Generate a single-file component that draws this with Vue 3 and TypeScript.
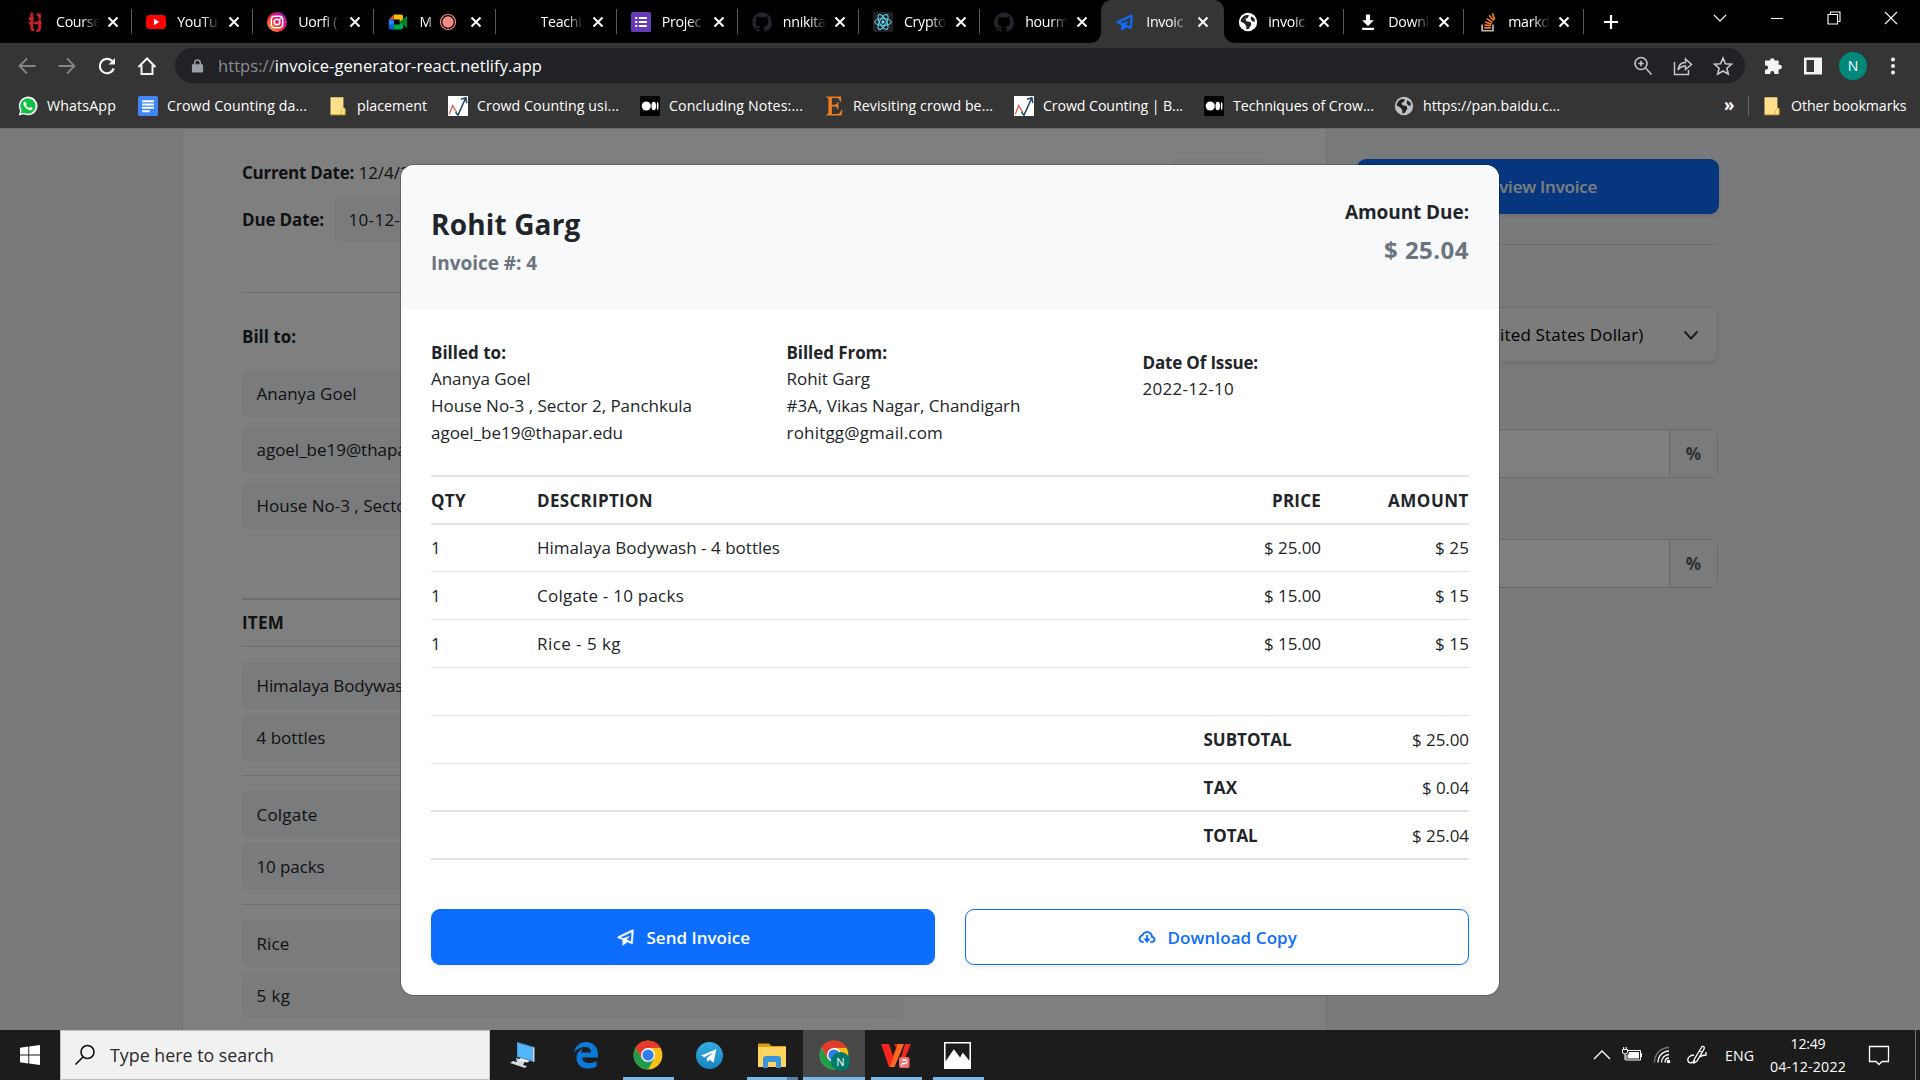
<script setup lang="ts">
interface Tab { icon: string; title: string; active?: boolean; rec?: boolean; sep?: boolean; narrow?: boolean }
interface Bookmark { icon: string; label: string; w: number }
interface Line { qty: number; desc: string; price: string; amount: string; w: number }

// Spreads the tracking of a label so that it occupies the given width.
const vFit = {
  mounted(el: HTMLElement, binding: { value: number }) {
    const range = document.createRange()
    range.selectNodeContents(el)
    const natural = range.getBoundingClientRect().width
    const count = (el.textContent ?? '').trim().length
    if (count > 1) el.style.letterSpacing = `${((binding.value - natural) / count).toFixed(3)}px`
  },
}

const plane = '<path d="M20.563 3.34a1.002 1.002 0 0 0-.989-.079l-17 8a1 1 0 0 0 .026 1.821L8 15.445v6.722l5.836-4.168 4.764 2.084a1 1 0 0 0 1.399-.85l1-15a1.005 1.005 0 0 0-.436-.893zm-2.466 14.34-5.269-2.306L16 11.167l-7.649 2.551-2.932-1.283 13.471-6.34-.793 11.585z"/>'
const chrome = '<circle cx="12" cy="12" r="11.5" fill="#fbc116"/><path d="M12 12 2 6.300A11.500 11.500 0 0 1 21.960 6.250H12z" fill="#e33b2e"/><path d="M12 .5A11.5 11.5 0 0 0 2.040 6.250L7 15l5-3V6.250h9.960A11.500 11.500 0 0 0 12 .5z" fill="#e33b2e"/><path d="M2.040 6.250A11.500 11.500 0 0 0 12 23.500l5-8.600L12 12 7 14.900z" fill="#1f9d4d"/><circle cx="12" cy="12" r="5.600" fill="#fff"/><circle cx="12" cy="12" r="4.500" fill="#2f7de9"/>'
const github = '<path fill="#22272d" d="M12 .5C5.400.5.200 5.800.200 12.300c0 5.200 3.400 9.600 8 11.200.6.100.8-.3.800-.6v-2.100c-3.300.7-4-1.400-4-1.400-.5-1.400-1.300-1.700-1.300-1.700-1.100-.7.100-.7.100-.7 1.200.1 1.800 1.200 1.800 1.200 1 1.800 2.800 1.300 3.400 1 .1-.8.400-1.300.8-1.600-2.700-.3-5.400-1.300-5.400-5.800 0-1.300.5-2.300 1.200-3.200-.1-.3-.5-1.500.1-3.200 0 0 1-.3 3.300 1.200a11 11 0 0 1 6 0c2.200-1.500 3.200-1.200 3.200-1.200.7 1.700.3 2.900.1 3.200.8.900 1.200 1.900 1.200 3.200 0 4.500-2.700 5.500-5.400 5.800.5.400.9 1.100.9 2.200v3.300c0 .3.200.7.800.6a11.800 11.800 0 0 0 8-11.200C23.800 5.800 18.600.5 12 .5z"/>'
const globe = (c: string): string => `<circle cx="12" cy="12" r="11" fill="${c}"/><path fill="#222" d="M4 8c2-3 5-5 9-4l-1 3-3 1 1 3 5 1 1 3-3 5-3 1v-4l-2-3-5-3zM16 5l4 3v4l-3-1-2-3z"/>`
const icons: Record<string, string> = {
  plane,
  chrome,
  github,
  cloud: '<path d="M18.948 11.112C18.511 7.670 15.563 5 12.004 5c-2.756 0-5.150 1.611-6.243 4.150-2.148.642-3.757 2.670-3.757 4.850 0 2.757 2.243 5 5 5h1v-2h-1c-1.654 0-3-1.346-3-3 0-1.404 1.199-2.757 2.673-3.016l.581-.102.192-.558C8.153 8.273 9.898 7 12.004 7c2.757 0 5 2.243 5 5v1h1c1.103 0 2 .897 2 2s-.897 2-2 2h-2v2h2c2.206 0 4-1.794 4-4a4.008 4.008 0 0 0-3.056-3.888z"/><path d="M13.004 14v-4h-2v4h-3l4 5 4-5z"/>',
  planeBlue: `<g fill="#0d6efd" stroke="#0d6efd" stroke-width=".6">${plane}</g>`,
  tl: '<g fill="none" stroke="#c62127" stroke-width="3.200"><path d="M8 1v18.500q0 2 3 2M4.500 8h6M4.500 13.500h6M14 3.500h5M17.500 9v11q0 2.500-4 2.500M11 13h9M17.500 5v3"/></g>',
  youtube: '<rect x="0" y="3.500" width="24" height="17" rx="4.500" fill="#f00"/><path d="M9.500 8.200v7.600L16 12z" fill="#fff"/>',
  instagram: '<defs><linearGradient id="ig" x1="0" y1="1" x2="1" y2="0"><stop offset="0" stop-color="#fec34a"/><stop offset=".35" stop-color="#f9472f"/><stop offset=".6" stop-color="#e0167b"/><stop offset="1" stop-color="#7a22d0"/></linearGradient></defs><circle cx="12" cy="12" r="12" fill="url(#ig)"/><g fill="none" stroke="#fff" stroke-width="1.800"><rect x="5.200" y="5.200" width="13.600" height="13.600" rx="4"/><circle cx="12" cy="12" r="3.400"/></g><circle cx="16" cy="8" r="1" fill="#fff"/>',
  meet: '<path d="M1 9 7 3v6z" fill="#ea4335"/><path d="M7 3h9q2 0 2 2v4l-4 3V9H7z" fill="#fbbc04"/><path d="M1 9h6v7H1z" fill="#2684fc"/><path d="M1 15h6v6H3q-2 0-2-2z" fill="#0066da"/><path d="M7 15h7v-3l4 3v4q0 2-2 2H7z" fill="#00ac47"/><path d="m14 12 8-7q1 0 1 1v12q0 1-1 1z" fill="#00832d"/>',
  forms: '<rect width="24" height="24" rx="2" fill="#673ab7"/><path d="M5 6h2.500v2.500H5zM9.500 6H19v2.500H9.500zM5 10.800h2.500v2.500H5zM9.500 10.800H19v2.500H9.500zM5 15.600h2.500v2.500H5zM9.500 15.600H19v2.500H9.500z" fill="#fff"/>',
  react: '<rect width="24" height="24" rx="2.500" fill="#222"/><g fill="none" stroke="#61dafb" stroke-width="1.200"><ellipse cx="12" cy="12" rx="10" ry="4"/><ellipse cx="12" cy="12" rx="10" ry="4" transform="rotate(60 12 12)"/><ellipse cx="12" cy="12" rx="10" ry="4" transform="rotate(120 12 12)"/></g><circle cx="12" cy="12" r="2" fill="#61dafb"/>',
  globe: globe('#fff'),
  globeGrey: globe('#bdc1c6'),
  download: '<path fill="#fff" d="M9.500 3h5v7H19l-7 7-7-7h4.500zM5 19h14v2.500H5z"/>',
  stack: '<g fill="none"><path d="M5 15v7.500h13V15" stroke="#bcbbbb" stroke-width="2"/><path d="M7.500 19h8M7.600 15.600l8 .8M8.500 12l7.700 2.400M10.500 8l6.800 4.400M13.500 4l5.200 6.200M17.500 1.500l2.300 7.600" stroke="#f48024" stroke-width="2"/></g>',
  whatsapp: '<path d="M1 23.300 2.500 17.500A11.200 11.200 0 1 1 7 21.800z" fill="#fff"/><path d="m3.300 21 1-3.800A9.200 9.200 0 1 1 7.300 20z" fill="#0dc143"/><path d="M8.300 6.500c-.6 0-1.800 1-1.800 2.700 0 3 4.500 7.800 8.200 7.800 1.800 0 2.800-1.200 2.800-2.600l-2.700-1.500-1.400 1.500c-1.600-.5-3.200-2.100-3.800-3.500l1.100-1.300z" fill="#fff"/>',
  docs: '<rect width="24" height="24" rx="2" fill="#4285f4"/><path d="M5 5h14v2.400H5zM5 9h14v2.400H5zM5 13h14v2.400H5zM5 17h9v2.400H5z" fill="#fff"/>',
  folder: '<path d="M3 1.500h15.500V14l2 1v7.500H3z" fill="#ffe08a"/><path d="M15.500 22.500c0-4 .5-5 3-7.500M3 22.500h17.500V15" fill="none" stroke="#d9b13f" stroke-width="1.200"/>',
  chart: '<rect width="24" height="24" fill="#fff"/><path d="M1.500 22 5.500 11.500l5 8" fill="none" stroke="#e0604c" stroke-width="1.600"/><path d="M9 19.500 12 23 21 3M15.500 4l6-2 1 6.500" fill="none" stroke="#1d4468" stroke-width="1.800"/>',
  medium: '<rect width="24" height="24" rx="1.500" fill="#000"/><circle cx="7.500" cy="12" r="5.500" fill="#fff"/><ellipse cx="16.500" cy="12" rx="2.700" ry="5.200" fill="#fff"/><ellipse cx="21.200" cy="12" rx="1" ry="4.700" fill="#fff"/>',
  etsy: '<path d="M2.500.5h18v6.300h-1.300C18.500 3.500 17.500 2.500 15 2.500H9.500v8h3.300c2 0 2.800-.8 3.200-3.200h1.200v8.500H16c-.4-2.600-1.200-3.300-3.200-3.300H9.500v9h6c3 0 4.300-1.500 5.200-5h1.300l-.8 7H2.500v-1.300c2.300-.2 2.800-.7 2.800-2.600V4.400c0-1.900-.5-2.400-2.800-2.600z" fill="#ee7f22"/>',
}

const tabs: Tab[] = [
  { icon: 'tl', title: 'Course', sep: true },
  { icon: 'youtube', title: 'YouTu', sep: true },
  { icon: 'instagram', title: 'Uorfi (', sep: true },
  { icon: 'meet', title: 'M', rec: true, sep: true },
  { icon: '', title: 'Teachi', sep: true },
  { icon: 'forms', title: 'Projec', sep: true },
  { icon: 'github', title: 'nnikita', sep: true },
  { icon: 'react', title: 'Crypto', sep: true },
  { icon: 'github', title: 'hourm' },
  { icon: 'planeBlue', title: 'Invoic', active: true },
  { icon: 'globe', title: 'invoic', sep: true, narrow: true },
  { icon: 'download', title: 'Downl', sep: true, narrow: true },
  { icon: 'stack', title: 'markd', sep: true, narrow: true },
]

const bookmarks: Bookmark[] = [
  { icon: 'whatsapp', label: 'WhatsApp', w: 69 },
  { icon: 'docs', label: 'Crowd Counting da...', w: 140 },
  { icon: 'folder', label: 'placement', w: 70 },
  { icon: 'chart', label: 'Crowd Counting usi...', w: 142 },
  { icon: 'medium', label: 'Concluding Notes:...', w: 134 },
  { icon: 'etsy', label: 'Revisiting crowd be...', w: 140 },
  { icon: 'chart', label: 'Crowd Counting | B...', w: 140 },
  { icon: 'medium', label: 'Techniques of Crow...', w: 141 },
  { icon: 'globeGrey', label: 'https://pan.baidu.c...', w: 137 },
]

const billTo: string[] = ['Ananya Goel', 'agoel_be19@thapar.edu', 'House No-3 , Sector 2, Panchkula']
const billToW: number[] = [100, 192, 261.5]
const items: [string, string][] = [['Himalaya Bodywash', '4 bottles'], ['Colgate', '10 packs'], ['Rice', '5 kg']]
const itemsW: [number, number][] = [[157, 69], [61, 68], [33, 34]]

const lines: Line[] = [
  { qty: 1, desc: 'Himalaya Bodywash - 4 bottles', price: '$ 25.00', amount: '$ 25', w: 243 },
  { qty: 1, desc: 'Colgate - 10 packs', price: '$ 15.00', amount: '$ 15', w: 147 },
  { qty: 1, desc: 'Rice - 5 kg', price: '$ 15.00', amount: '$ 15', w: 84 },
]
const totals = [
  { label: 'SUBTOTAL', value: '$ 25.00', lw: 88, w: 57 },
  { label: 'TAX', value: '$ 0.04', lw: 34, w: 47 },
  { label: 'TOTAL', value: '$ 25.04', lw: 54, w: 57 },
]
</script>

<template>
  <div class="screen">
    <header class="browser">
      <div class="tabs">
        <div v-for="(t, i) in tabs" :key="i" class="tab" :class="{ active: t.active, sep: t.sep, narrow: t.narrow }">
          <svg class="fav" viewBox="0 0 24 24" v-html="icons[t.icon] || ''"></svg>
          <span class="title" :class="{ short: t.rec }">{{ t.title }}</span>
          <svg v-if="t.rec" class="rec" viewBox="0 0 18 18"><circle cx="9" cy="9" r="7.500" fill="none" stroke="#f28b82" stroke-width="1.200" /><circle cx="9" cy="9" r="5.700" fill="#f28b82" /></svg>
          <svg class="x" viewBox="0 0 12 12"><path d="M1.500 1.500l9 9M10.500 1.500l-9 9" stroke="#fff" stroke-width="2" /></svg>
        </div>
        <svg class="plus" viewBox="0 0 16 16"><path d="M8 1v14M1 8h14" stroke="#fff" stroke-width="2.200" /></svg>
        <div class="wincontrols">
          <svg viewBox="0 0 16 16"><path d="M2 5l6 6 6-6" /></svg>
          <svg viewBox="0 0 16 16"><path d="M2 8.500h12" /></svg>
          <svg viewBox="0 0 16 16"><path d="M2 4.500h9.500v9.500H2zM4.500 4.500V2H14v9.500h-2.500" /></svg>
          <svg viewBox="0 0 16 16"><path d="M2 2l12 12M14 2L2 14" /></svg>
        </div>
      </div>
      <div class="toolbar">
        <div class="nav">
          <svg viewBox="0 0 20 20" fill="none" stroke="#85868a" stroke-width="1.800"><path d="M18.500 10H2.500M10 2.500 2.500 10l7.500 7.500" /></svg>
          <svg viewBox="0 0 20 20" fill="none" stroke="#85868a" stroke-width="1.800"><path d="M1.500 10h16M10 2.500l7.500 7.500-7.500 7.500" /></svg>
          <svg viewBox="0 0 20 20" fill="none" stroke="#f1f3f4" stroke-width="2.200"><path d="M16.800 12.500A7.200 7.200 0 1 1 15 4.800l2 2" /><path d="M18 2v6.500h-6.500z" fill="#f1f3f4" stroke="none" /></svg>
          <svg viewBox="0 0 20 20" fill="none" stroke="#f1f3f4" stroke-width="2"><path d="M4.500 9v9h11V9M1.500 11 10 2.500l8.500 8.500" /></svg>
        </div>
        <div class="omnibox">
          <svg class="lock" viewBox="0 0 14 16"><path d="M2 6h10q1 0 1 1v7q0 1-1 1H2q-1 0-1-1V7q0-1 1-1z" fill="#9aa0a6" /><path d="M4 7V4.500a3 3 0 0 1 6 0V7" fill="none" stroke="#9aa0a6" stroke-width="1.600" /></svg>
          <span v-fit="324" class="url"><i>https://</i>invoice-generator-react.netlify.app</span>
          <svg viewBox="0 0 20 20" fill="none" stroke="#c4c7c5" stroke-width="1.600"><circle cx="8" cy="7.500" r="6" /><path d="M12.500 12l6 6.500M8 4.800v5.400M5.300 7.500h5.400" /></svg>
          <svg viewBox="0 0 20 20" fill="none" stroke="#c4c7c5" stroke-width="1.500"><path d="M1.500 6v12.500h14V14M5 14c.5-5 3-7.500 7.500-7.500V3l6 5.500-6 5V10C9 10 7 11 5 14z" /></svg>
          <svg viewBox="0 0 20 20" fill="none" stroke="#c4c7c5" stroke-width="1.600"><path d="M10 2l2.400 5.700 6.100.5-4.600 4 1.400 6L10 15l-5.300 3.200 1.400-6-4.600-4 6.100-.5z" /></svg>
        </div>
        <div class="actions">
          <svg viewBox="0 0 20 20"><path fill="#f1f3f4" d="M7 4.500a2.300 2.300 0 0 1 4.600 0h4v4.300h1a2.300 2.300 0 0 1 0 4.600h-1V18h-4.300v-1a2 2 0 0 0-4 0v1H2v-4.300h1a2 2 0 0 0 0-4.200H2v-5z" /></svg>
          <svg viewBox="0 0 20 20"><path fill="#f1f3f4" fill-rule="evenodd" d="M1 1.500h18v17H1zM3.500 4v12H11V4z" /></svg>
          <span class="avatar">N</span>
          <svg viewBox="0 0 20 20" fill="#f1f3f4"><circle cx="10" cy="3.500" r="2" /><circle cx="10" cy="10" r="2" /><circle cx="10" cy="16.500" r="2" /></svg>
        </div>
      </div>
      <div class="bookmarks">
        <div v-for="(b, i) in bookmarks" :key="i" class="bm">
          <svg viewBox="0 0 24 24" v-html="icons[b.icon]"></svg><span v-fit="b.w">{{ b.label }}</span>
        </div>
        <b class="more">»</b>
        <div class="bm other"><svg viewBox="0 0 24 24" v-html="icons.folder"></svg><span v-fit="115.500">Other bookmarks</span></div>
      </div>
    </header>

    <main class="viewport">
      <section class="sheet">
        <div class="dates">
          <div>
            <p class="cur"><b v-fit="112">Current Date:</b> 12/4/2022</p>
            <div class="due"><b v-fit="82">Due Date:</b><span class="field"><span v-fit="92">10-12-2022</span></span></div>
          </div>
          <div class="number"></div>
        </div>
        <div class="rule"></div>
        <b v-fit="54" class="bill">Bill to:</b>
        <div class="stack"><div v-for="(b, i) in billTo" :key="b" class="field"><span v-fit="billToW[i]">{{ b }}</span></div></div>
        <div class="itemhead"><b v-fit="42">ITEM</b></div>
        <div v-for="(it, i) in items" :key="i" class="item">
          <div class="field"><span v-fit="itemsW[i][0]">{{ it[0] }}</span></div>
          <div class="field"><span v-fit="itemsW[i][1]">{{ it[1] }}</span></div>
        </div>
      </section>
      <aside class="side">
        <div class="review"><span v-fit="118">Review Invoice</span></div>
        <div class="siderule"></div>
        <div class="select"><span v-fit="211">USD (United States Dollar)</span><svg viewBox="0 0 16 16"><path d="M1.500 4.500 8 11.500l6.500-7" fill="none" stroke="#343a40" stroke-width="2" /></svg></div>
        <div class="percent"><i></i><b>%</b></div>
        <div class="percent"><i></i><b>%</b></div>
      </aside>

      <div class="backdrop"></div>
      <div class="modal">
        <div class="mhead">
          <div><h4 v-fit="149.500">Rohit Garg</h4><h6 v-fit="106">Invoice #: 4</h6></div>
          <div class="due-amt"><h6 v-fit="124">Amount Due:</h6><h5 v-fit="85">$ 25.04</h5></div>
        </div>
        <div class="mbody">
          <div class="parties">
            <div><p><b v-fit="75">Billed to:</b></p><p><span v-fit="99.500">Ananya Goel</span></p><p><span v-fit="261">House No-3 , Sector 2, Panchkula</span></p><p><span v-fit="192">agoel_be19@thapar.edu</span></p></div>
            <div><p><b v-fit="100.500">Billed From:</b></p><p><span v-fit="83.500">Rohit Garg</span></p><p><span v-fit="234">#3A, Vikas Nagar, Chandigarh</span></p><p><span v-fit="156.500">rohitgg@gmail.com</span></p></div>
            <div class="issue"><p><b v-fit="115.500">Date Of Issue:</b></p><p><span v-fit="91.500">2022-12-10</span></p></div>
          </div>
          <div class="row head"><b><span v-fit="35">QTY</span></b><b><span v-fit="116">DESCRIPTION</span></b><b><span v-fit="49">PRICE</span></b><b><span v-fit="81">AMOUNT</span></b></div>
          <div v-for="l in lines" :key="l.desc" class="row"><span>{{ l.qty }}</span><span><span v-fit="l.w">{{ l.desc }}</span></span><span><span v-fit="57">{{ l.price }}</span></span><span><span v-fit="34">{{ l.amount }}</span></span></div>
          <div class="row"></div>
          <div v-for="t in totals" :key="t.label" class="row sum" :class="{ thick: t.label !== 'SUBTOTAL' }"><b><span v-fit="t.lw">{{ t.label }}</span></b><span><span v-fit="t.w">{{ t.value }}</span></span></div>
          <div class="buttons">
            <div class="btn solid"><svg viewBox="0 0 24 24" v-html="icons.plane"></svg><span v-fit="103.500">Send Invoice</span></div>
            <div class="btn"><svg viewBox="0 0 24 24" v-html="icons.cloud"></svg><span v-fit="129.500">Download Copy</span></div>
          </div>
        </div>
      </div>
    </main>

    <footer class="taskbar">
      <div class="start"><svg viewBox="0 0 20 20"><path fill="#fff" d="M0 2.700 8.300 1.600v7.900H0zM9.200 1.500 20 0v9.500H9.200zM0 10.500h8.300v7.900L0 17.300zM9.200 10.500H20V20L9.200 18.500z" /></svg></div>
      <div class="search">
        <svg viewBox="0 0 22 22" fill="none" stroke="#111" stroke-width="1.600"><circle cx="13.500" cy="8" r="6.500" /><path d="M9 13 1.500 20.500" /></svg>
        <span v-fit="164">Type here to search</span>
      </div>
      <div class="apps">
        <div class="app"><svg viewBox="0 0 30 30"><path d="M8 2l17 5v15L8 17z" fill="#3f9ee8" /><path d="M9 3.500l15 4.500v12.500L9 16z" fill="#54b6f6" /><path d="M24 7l1.500.5V22l-1.500-.5z" fill="#cdd5da" /><path d="M7 18l9 3-2 4 4 1-2 2-15-5 3-2 4 1z" fill="#d3dae0" /><path d="m12 18 9 3-3 1.500-9-2.500z" fill="#eef1f3" /></svg></div>
        <div class="app"><svg viewBox="0 0 30 30"><path d="M3 13C4 6 9 2 15 2c7 0 12 5 12 12v3.500H11c.3 4 3.500 5.500 7.500 5.500 3 0 5-.8 7-2v5.500c-2.500 1.500-5.500 2-8.500 2C10 28.500 5.500 24 5.500 18c0-4.500 2.500-7.500 6.500-9.500-1 1.300-1.500 2.500-1.500 4h9.500c0-3.500-2-5.500-6-5.500-4.500 0-9 2.500-11 6z" fill="#0b7ad8" /></svg></div>
        <div class="app run"><svg viewBox="0 0 24 24" v-html="icons.chrome"></svg></div>
        <div class="app"><svg class="sm" viewBox="0 0 24 24"><defs><linearGradient id="tg" x1="0" y1="0" x2="0" y2="1"><stop offset="0" stop-color="#34ace0" /><stop offset="1" stop-color="#1583c2" /></linearGradient></defs><circle cx="12" cy="12" r="12" fill="url(#tg)" /><path d="m4.500 12 13.500-5.500-2.300 12-3.700-2.700-2 2-.5-3.300 6-5.500-8 4.500z" fill="#fff" /></svg></div>
        <div class="app run multi"><svg viewBox="0 0 30 28"><path d="M1 2.500h11l2.500 2.500H29v21H1z" fill="#dca00f" /><path d="M1 6h28v20H1z" fill="#ffd460" /><path d="M6 27V18q0-3 3-3h12q3 0 3 3v9h-5v-6h-8v6z" fill="#3994dc" /></svg></div>
        <div class="app run current"><svg viewBox="0 0 24 24" v-html="icons.chrome"></svg><span class="badge">N</span></div>
        <div class="app run"><svg viewBox="0 0 30 30"><path d="M0 4h8l4 12 3-8-1.500-4H22l-10 23H8z" fill="#f3271d" /><path d="m17 4h6L13.500 27H9z" fill="#ff6a1f" /><path d="m24 4h6l-6 14-5 3z" fill="#f3271d" /><rect x="18" y="17" width="10.500" height="11" rx="2" fill="#f36c70" /><path d="M21 20h4q2 3-1 3.500h-3M21 26v-2.500" fill="none" stroke="#fff" stroke-width="1.300" /></svg></div>
        <div class="app run"><svg class="sm" viewBox="0 0 26 26"><path fill="#fff" fill-rule="evenodd" d="M0 0h26v26H0zM1.500 1.500v17L9.500 7l6 8 2.500-5 6.500 8V1.500z" /></svg></div>
      </div>
      <div class="tray">
        <svg viewBox="0 0 20 20"><path d="M2 14l8-8 8 8" fill="none" stroke="#fff" stroke-width="1.400" /></svg>
        <svg viewBox="0 0 20 20"><path d="M6 5.500h12.500v9.500H4v-5" fill="none" stroke="#fff" /><path d="M7.500 7H17v6.500H5.500V10zM19 8h1.200v4H19z" fill="#fff" /><path d="M.5 4.500h5V7q0 2-2.500 2T.5 7zM1.700 2v3M4.300 2v3M3 9v6" stroke="#fff" fill="none" /></svg>
        <svg viewBox="0 0 20 20" fill="none" stroke="#fff" stroke-width="1.300"><path d="M2.500 17.500C2.500 9 9 2.500 17 2.500" stroke="#777" /><path d="M6 17.500C6 11 11 6 17 6M9.500 17.500c0-4.500 3.500-8 7.500-8M13 17.500c0-2.500 1.500-4.500 4-4.500" /><circle cx="16.500" cy="16.500" r="1.200" fill="#fff" /></svg>
        <svg viewBox="0 0 20 20" fill="none" stroke="#fff" stroke-width="1.300"><path d="M15 1.500q3-.5 2 2.500L10 16l-3 2 .5-4zM12 5.500l3.500 2M7 10C3 10 0 13 1 16s6 2 6-1M13 12c2-2 4-2 6-2v-3" /></svg>
        <span v-fit="29" class="lang">ENG</span>
        <div class="clock"><span v-fit="35">12:49</span><span v-fit="76">04-12-2022</span></div>
        <svg class="note" viewBox="0 0 22 22"><path d="M1.500 2.500h19v15H14l-3 3-3-3H1.500z" fill="none" stroke="#fff" stroke-width="1.300" /></svg>
        <i class="peek"></i>
      </div>
    </footer>
  </div>
</template>

<style>
body { background: #000; overflow: hidden; }
</style>

<style scoped>
* { box-sizing: border-box; }
.screen { width: 1920px; height: 1080px; display: flex; flex-direction: column; overflow: hidden; font-family: "Open Sans", "Noto Sans", sans-serif; font-size: 17px; color: #212529; white-space: nowrap; }
svg { display: block; flex: none; }
p, h4, h5, h6 { margin: 0; }
.browser { height: 129px; flex: none; background: #353535; border-bottom: 1px solid #6a6a6a; color: #fff; }
.tabs { height: 43px; background: #000; display: grid; grid-template-columns: repeat(9, 121.150px) 123px repeat(3, 120px) 54px 1fr; padding-left: 11px; align-items: stretch; }
.tab { display: flex; align-items: center; padding-left: 14px; position: relative; font-size: 14.200px; }
.tab.sep::after { content: ""; position: absolute; right: 0; top: 9px; height: 25px; width: 1px; background: #5a5a5a; }
.tab.active { background: #353535; border-radius: 10px 10px 0 0; }
.tab.active::before, .tab.active::after { content: ""; position: absolute; bottom: 0; width: 10px; height: 10px; }
.tab.active::before { left: -10px; background: radial-gradient(circle at 0 0, #000 9.500px, #353535 10px); }
.tab.active::after { right: -10px; background: radial-gradient(circle at 100% 0, #000 9.500px, #353535 10px); }
.fav { width: 20px; height: 20px; }
.title { width: 43px; margin-left: 11px; overflow: hidden; letter-spacing: -0.300px; margin-top: -1px; -webkit-mask-image: linear-gradient(90deg, #000 60%, transparent 100%); mask-image: linear-gradient(90deg, #000 60%, transparent 100%); }
.narrow .title { margin-left: 10px; width: 42px; }
.title.short { width: 15px; }
.rec { width: 18px; height: 18px; margin: 0 5px; }
.x { width: 12px; height: 12px; margin-left: 8px; }
.plus { width: 16px; height: 16px; margin-left: 19px; align-self: center; }
.wincontrols { display: flex; justify-content: flex-end; gap: 41px; padding: 10px 21px 0 0; }
.wincontrols svg { width: 16px; height: 16px; fill: none; stroke: #fff; stroke-width: 1.100; }
.toolbar { height: 45px; display: flex; align-items: center; padding-left: 17px; }
.nav { display: flex; gap: 20px; width: 158px; }
.nav svg { width: 20px; height: 20px; }
.omnibox { width: 1570px; height: 35px; border-radius: 18px; background: #202226; display: flex; align-items: center; padding: 0 12px 0 16px; gap: 20px; }
.omnibox svg { width: 20px; height: 20px; }
.omnibox .lock { width: 13px; height: 16px; margin-right: -6px; }
.url { font-size: 16.500px; flex: 1; }
.url i { font-style: normal; color: #8b8e92; }
.actions { display: flex; align-items: center; gap: 20px; padding-left: 18px; }
.actions svg { width: 20px; height: 20px; }
.avatar { width: 28px; height: 28px; margin: 0 -4px; border-radius: 50%; background: #00897b; font-size: 14px; display: grid; place-items: center; }
.bookmarks { height: 40px; margin-top: -2px; padding-left: 18px; display: grid; grid-template-columns: 120px 190px 120px 192px 184px 190px 190px 190px 330px 24px 1fr; align-items: center; font-size: 14.200px; }
.bm { display: flex; align-items: center; gap: 9px; }
.bm svg { width: 20px; height: 20px; }
.bm span { margin-top: -2px; }
.more { font-size: 17px; padding-bottom: 4px; }
.other { border-left: 1px solid #6a6a6a; padding-left: 13px; }

.viewport { height: 901px; flex: none; position: relative; display: flex; background: #f3f4f6; padding-left: 182px; overflow: hidden; }
.sheet { width: 1145px; background: #fff; border: solid #e2e4e6; border-width: 0 1px; padding: 30px 59px 0; }
.sheet > * { display: block; }
.field { background: #f5f7fa; border-radius: 7px; height: 47px; display: flex; align-items: center; padding-left: 14.500px; }
.dates { display: flex !important; height: 133px; }
.cur { height: 28px; line-height: 28px; }
.due { display: flex; align-items: center; margin-top: 9px; }
.due .field { width: 190px; margin-left: 10px; }
.number { width: 96px; height: 47px; border-radius: 7px; background: #f5f7fa; margin-left: auto; margin-right: 0; }
.rule { height: 1px; background: #dcdcdd; }
.bill { height: 26px; line-height: 26px; margin-top: 31px; width: max-content; }
.stack { margin-top: 20px; width: 500px; }
.stack .field { margin-bottom: 9px; }
.itemhead { margin-top: 69px; height: 49px; border-top: 2px solid #d8dadc; border-bottom: 1px solid #d8dadc; line-height: 45px; }
.item { padding: 15px 0 14px; height: 129px; border-bottom: 1px solid #d8dadc; }
.item .field { width: 662px; }
.item .field + .field { margin-top: 5px; }
.side { width: 392px; padding: 30px 0 0 30px; }
.side > * { width: 361px; }
.review { height: 55px; width: 362px; background: #0d6efd; border-radius: 9px; color: #fff; font-weight: 600; display: grid; place-items: center; box-shadow: 0 2px 4px rgba(0, 0, 0, .075); }
.siderule { height: 1px; margin-top: 30px; background: #d8d9db; }
.select { height: 55px; margin-top: 62px; border: 1px solid #dfe1e3; border-radius: 9px; background: #f7f9f7; color: #000; display: flex; align-items: center; justify-content: flex-end; padding-right: 18px; gap: 39.500px; box-shadow: 0 2px 4px rgba(0, 0, 0, .075); }
.select svg { width: 16px; height: 16px; }
.percent { display: flex; height: 49px; margin-top: 67px; border: 1px solid #ced4da; border-radius: 7px; overflow: hidden; background: #fff; }
.percent + .percent { margin-top: 61px; }
.percent i { flex: 1; }
.percent b { width: 48px; display: grid; place-items: center; background: #f4f6f7; border-left: 1px solid #ced4da; color: #5b636a; font-weight: 700; padding-bottom: 1px; }
.backdrop { position: absolute; inset: 0; background: rgba(0, 0, 0, .5); }
.modal { position: absolute; left: 400px; top: 35px; width: 1100px; height: 832px; background: #fff; background-clip: padding-box; border: 1px solid rgba(0, 0, 0, .2); border-radius: 14px; overflow: hidden; }
.mhead { height: 144px; background: #f8f9fb; padding: 0 30px; display: flex; justify-content: space-between; }
.mhead h4 { font-size: 28px; line-height: 36px; margin-top: 41px; }
.mhead h6 { font-size: 19px; line-height: 26px; color: #6c757d; margin-top: 8px; width: max-content; }
.due-amt { display: flex; flex-direction: column; align-items: flex-end; }
.due-amt h6 { color: #212529; margin-top: 34px; }
.mhead h5 { font-size: 24px; line-height: 32px; color: #6c757d; margin-top: 9px; }
.mbody { padding: 30px 30px 0; }
.parties { display: grid; grid-template-columns: 355.500px 356px 1fr; height: 136px; line-height: 27px; }
.parties p + p { margin-top: -1px; margin-bottom: 1px; }
.parties .issue { padding-top: 10px; }
.row { display: grid; grid-template-columns: 106px 600.500px 183.500px 148px; height: 48px; border-bottom: 1px solid #dee2e6; align-items: center; }
.row > :nth-child(n + 3) { text-align: right; }
.row.head { height: 50px; border-top: 2px solid #e3e4e5; border-bottom: 2px solid #e3e4e5; }
.row.head + .row { height: 47px; padding-bottom: 1px; }
.row.sum { padding-left: 772.500px; grid-template-columns: 1fr 1fr; }
.row.sum > span { text-align: right; }
.row.thick { border-bottom: 2px solid #dee2e6; }
.buttons { display: grid; grid-template-columns: 1fr 1fr; gap: 30px; margin-top: 49px; }
.btn { height: 56px; border: 1px solid #0d6efd; border-radius: 9px; color: #0d6efd; font-weight: 600; display: flex; align-items: center; justify-content: center; gap: 10.500px; box-shadow: 0 2px 4px rgba(0, 0, 0, .075); }
.btn svg { width: 20px; height: 20px; fill: currentColor; stroke: currentColor; stroke-width: .4; }
.solid { background: #0d6efd; color: #fff; }

.taskbar { height: 50px; flex: none; background: #1c1c1c; display: flex; color: #fff; }
.start { width: 60px; display: grid; place-items: center; }
.start svg { width: 20px; height: 20px; }
.search { width: 430px; background: #f1f1f1; border: 1px solid #c0c0c0; color: #2b2b2b; display: flex; align-items: center; padding-left: 13px; gap: 14px; font-size: 17.800px; }
.search svg { width: 22px; height: 22px; }
.apps { display: flex; padding-left: 3px; }
.app { width: 62px; display: grid; place-items: center; position: relative; }
.app svg { width: 30px; height: 30px; }
.app svg.sm { width: 27px; height: 27px; margin-right: 1px; }
.app.run::after { content: ""; position: absolute; bottom: 0; left: 6px; width: 51px; height: 3px; background: #76b9ed; }
.app.multi::after { background: linear-gradient(90deg, #76b9ed 40px, #5580a5 40px); }
.app.current { background: #484848; }
.app.current::after { left: 0; width: 62px; }
.badge { position: absolute; left: 28px; top: 22px; width: 19px; height: 19px; border-radius: 50%; background: #00796b; font-size: 11px; line-height: 19px; text-align: center; }
.tray { margin-left: auto; display: flex; align-items: center; font-size: 14.200px; width: 328px; }
.tray svg { width: 20px; height: 20px; margin-right: 10px; }
.tray svg:nth-child(3) { margin-right: 15px; }
.tray svg:nth-child(4) { margin-right: 18px; }
.lang { width: 29px; }
.clock { width: 108px; display: flex; flex-direction: column; align-items: center; line-height: 23px; }
.tray .note { width: 22px; height: 22px; margin: 0 25px 0 6px; }
.peek { width: 1px; height: 50px; background: #777; }
</style>
